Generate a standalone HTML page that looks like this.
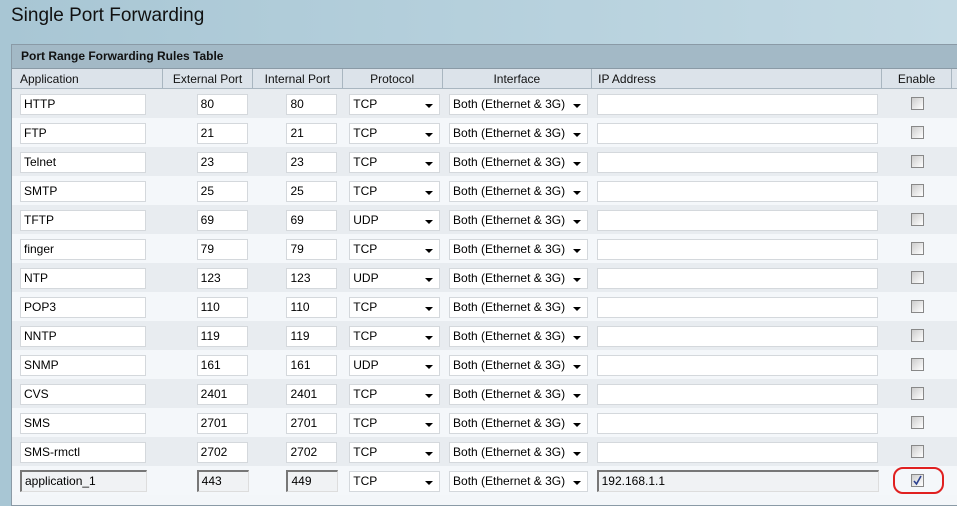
<!DOCTYPE html>
<html><head><style>
body{margin:0;width:957px;height:498px;overflow:hidden;background:linear-gradient(90deg,#a8c6d4,#b8d2de 60%,#c4dae4);font-family:"Liberation Sans",Arial,sans-serif;position:relative}
h1{position:absolute;left:11px;top:5px;margin:0;font-weight:normal;font-size:19px;color:#111}
.panel{position:absolute;left:11px;top:44px;width:960px;height:460px;border:1px solid #8a9aa6;background:#f3f6f9}
.bar{height:23px;background:#a3b9c6;border-bottom:1px solid #8a9aa6;font-weight:bold;font-size:12px;line-height:23px;padding-left:9px;color:#111}
table{border-collapse:collapse;font-size:12px;table-layout:fixed}
th{height:19px;background:#dce3ea;font-weight:normal;border-right:1px solid #a9b6c0;border-bottom:1px solid #a9b6c0;padding:0;color:#111}
td{height:29px;padding:0;position:relative}
tbody.r tr:nth-child(odd) td{background:#e8ecf0}
tbody.r tr:nth-child(even) td{background:#f4f7fa}
.i{position:absolute;top:5px;height:19px;border:1px solid #d4d8dc;background:#fff;font-size:12px;line-height:19px;padding-left:3px;box-sizing:content-box;color:#000;white-space:nowrap;overflow:hidden}
.d{border-color:#777 #ddd #ddd #777;border-width:2px 1px 1px 2px;background:#f0f2f4;top:4px}
.s:after{content:"";position:absolute;right:6px;top:9px;border-left:4px solid transparent;border-right:4px solid transparent;border-top:4px solid #000}
.c{position:absolute;left:29px;top:8px;width:11px;height:11px;border:1px solid #888;background:linear-gradient(135deg,#ccc,#fff)}
</style></head><body>
<h1>Single Port Forwarding</h1>
<div class="panel"><div class="bar">Port Range Forwarding Rules Table</div>
<table id="t"><colgroup><col style="width:151px"><col style="width:90px"><col style="width:90px"><col style="width:100px"><col style="width:150px"><col style="width:291px"><col style="width:70px"><col style="width:20px"></colgroup>
<thead><tr><th style="text-align:left;padding-left:8px">Application</th><th>External Port</th><th>Internal Port</th><th>Protocol</th><th>Interface</th><th style="text-align:left;padding-left:6px">IP Address</th><th>Enable</th><th></th></tr></thead>
<tbody class="r" id="b"></tbody>
</table></div>
<div style="position:absolute;left:893px;top:467px;width:47px;height:23px;border:2px solid #e02020;border-radius:10px"></div>
<script>
var d=[["HTTP",80,80,"TCP"],["FTP",21,21,"TCP"],["Telnet",23,23,"TCP"],["SMTP",25,25,"TCP"],["TFTP",69,69,"UDP"],["finger",79,79,"TCP"],["NTP",123,123,"UDP"],["POP3",110,110,"TCP"],["NNTP",119,119,"TCP"],["SNMP",161,161,"UDP"],["CVS",2401,2401,"TCP"],["SMS",2701,2701,"TCP"],["SMS-rmctl",2702,2702,"TCP"],["application_1",443,449,"TCP"]];
var h="";d.forEach(function(r,k){var L=k==13,c=L?" d":"";
h+='<tr><td><div class="i'+c+'" style="left:8px;width:121px">'+r[0]+'</div></td><td><div class="i'+c+'" style="left:34px;width:46px">'+r[1]+'</div></td><td><div class="i'+c+'" style="left:34px;width:46px">'+r[2]+'</div></td><td><div class="i s" style="left:7px;width:86px">'+r[3]+'</div></td><td><div class="i s" style="left:7px;width:134px">Both (Ethernet &amp; 3G)</div></td><td><div class="i'+c+'" style="left:5px;width:276px">'+(L?"192.168.1.1":"")+'</div></td><td><div class="c">'+(L?'<svg width="11" height="11" style="position:absolute;left:0;top:0"><path d="M2 6 L4.5 9 L9 1" stroke="#2a3f8f" stroke-width="1.6" fill="none"/></svg>':'')+'</div></td><td></td></tr>';});
document.getElementById("b").innerHTML=h;
</script>
</body></html>
